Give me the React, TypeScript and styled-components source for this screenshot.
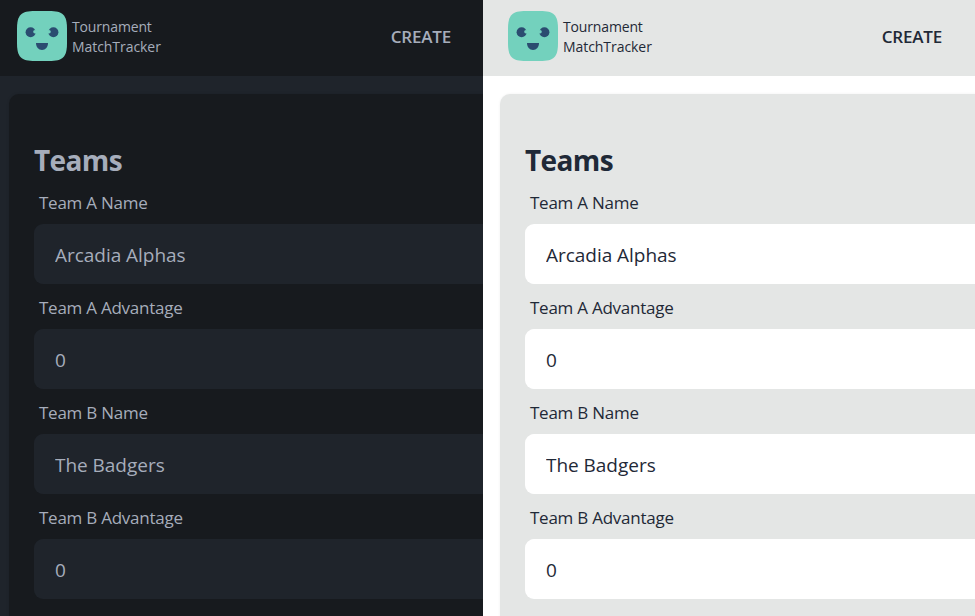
import React from "react";
import styled, { createGlobalStyle, ThemeProvider } from "styled-components";

const GlobalStyle = createGlobalStyle`
  *, *::before, *::after { box-sizing: border-box; }
  html, body { margin: 0; overflow: hidden; }
  body { font-family: "Open Sans", "Noto Sans", sans-serif; }
`;

const dark = { page: "#1f242b", surface: "#171a1e", text: "#a6adbb", shadow: "rgba(0,0,0,0.12)" };
const light = { page: "#ffffff", surface: "#e4e6e5", text: "#1f2937", shadow: "rgba(0,0,0,0.06)" };
type Palette = typeof dark;

const Screen = styled.div`
  display: flex;
  width: 975px;
  height: 616px;
  overflow: hidden;
`;

const Pane = styled.section<{ $width: number; $gutter: number }>`
  flex: none;
  width: ${(p) => p.$width}px;
  height: 616px;
  overflow: hidden;
  padding-left: ${(p) => p.$gutter}px;
  color: ${(p) => (p.theme as Palette).text};
  background: ${(p) => (p.theme as Palette).page};
`;

const Header = styled.header<{ $gutter: number }>`
  display: flex;
  align-items: center;
  justify-content: space-between;
  width: 483px;
  height: 76px;
  padding: 0 32px 4px 17px;
  box-shadow: -${(p) => p.$gutter}px 0 0 ${(p) => (p.theme as Palette).surface},
    16px 0 0 ${(p) => (p.theme as Palette).surface};
  background: ${(p) => (p.theme as Palette).surface};
`;

const Brand = styled.div`
  display: flex;
  align-items: center;
  gap: 5px;
`;

const BrandName = styled.div`
  display: flex;
  flex-direction: column;
  padding-top: 1px;
  font-size: 14px;
  line-height: 20px;
`;

const Line = styled.span<{ $spacing: number }>`
  letter-spacing: ${(p) => p.$spacing}px;
  white-space: nowrap;
`;

const Create = styled.button`
  padding: 1px 0 0;
  border: 0;
  background: none;
  color: inherit;
  font: 600 17px/24px "Open Sans", sans-serif;
  letter-spacing: -0.2px;
`;

const Card = styled.main`
  width: 520px;
  height: 560px;
  margin: 18px 0 0 9px;
  padding: 47px 0 0 25px;
  border-radius: 10px;
  background: ${(p) => (p.theme as Palette).surface};
  box-shadow: 0 0 3px ${(p) => (p.theme as Palette).shadow};
`;

const Title = styled.h1`
  margin: 0 0 5px;
  font-size: 28px;
  line-height: 38px;
  font-weight: 700;
  letter-spacing: -0.6px;
`;

const Field = styled.label`
  display: block;
  height: 105px;
`;

const Caption = styled.span`
  display: block;
  height: 40px;
  padding: 7px 0 0 5px;
  font-size: 17px;
  line-height: 24px;
  letter-spacing: -0.25px;
  white-space: nowrap;
`;

const Input = styled.input`
  display: block;
  width: 600px;
  height: 60px;
  margin: 0;
  padding: 2px 21px 0;
  border: 0;
  border-radius: 9px;
  outline: 0;
  color: inherit;
  background: ${(p) => (p.theme as Palette).page};
  font: 400 19px/28px "Open Sans", sans-serif;
  letter-spacing: -0.03px;
`;

const Logo = () => (
  <svg width="50" height="50" viewBox="0 0 50 50" aria-hidden="true">
    <path fill="#73d1bd" d="M0 18C0 4 4 0 18 0h14c14 0 18 4 18 18v14c0 14-4 18-18 18H18C4 50 0 46 0 32Z" />
    <g fill="#2b4c70">
      <circle cx="13.6" cy="21.2" r="5" />
      <circle cx="36.4" cy="21.2" r="5" />
      <path d="M19 32h12c0 4-2.500 7-6 7S19 36 19 32Z" />
    </g>
    <g fill="#73d1bd">
      <circle cx="18" cy="20.8" r="1.800" />
      <circle cx="32" cy="20.8" r="1.800" />
    </g>
  </svg>
);

const fields = [
  { label: "Team A Name", value: "Arcadia Alphas" },
  { label: "Team A Advantage", value: "0" },
  { label: "Team B Name", value: "The Badgers" },
  { label: "Team B Advantage", value: "0" },
];

const Tracker = ({ theme, width, gutter }: { theme: Palette; width: number; gutter: number }) => (
  <ThemeProvider theme={theme}>
    <Pane $width={width} $gutter={gutter}>
      <Header $gutter={gutter}>
        <Brand>
          <Logo />
          <BrandName>
            <Line $spacing={-0.15}>Tournament</Line>
            <Line $spacing={-0.06}>MatchTracker</Line>
          </BrandName>
        </Brand>
        <Create>CREATE</Create>
      </Header>
      <Card>
        <Title>Teams</Title>
        {fields.map((f) => (
          <Field key={f.label}>
            <Caption>{f.label}</Caption>
            <Input defaultValue={f.value} />
          </Field>
        ))}
      </Card>
    </Pane>
  </ThemeProvider>
);

export default function App() {
  return (
    <Screen>
      <GlobalStyle />
      <Tracker theme={dark} width={483} gutter={0} />
      <Tracker theme={light} width={492} gutter={8} />
    </Screen>
  );
}
